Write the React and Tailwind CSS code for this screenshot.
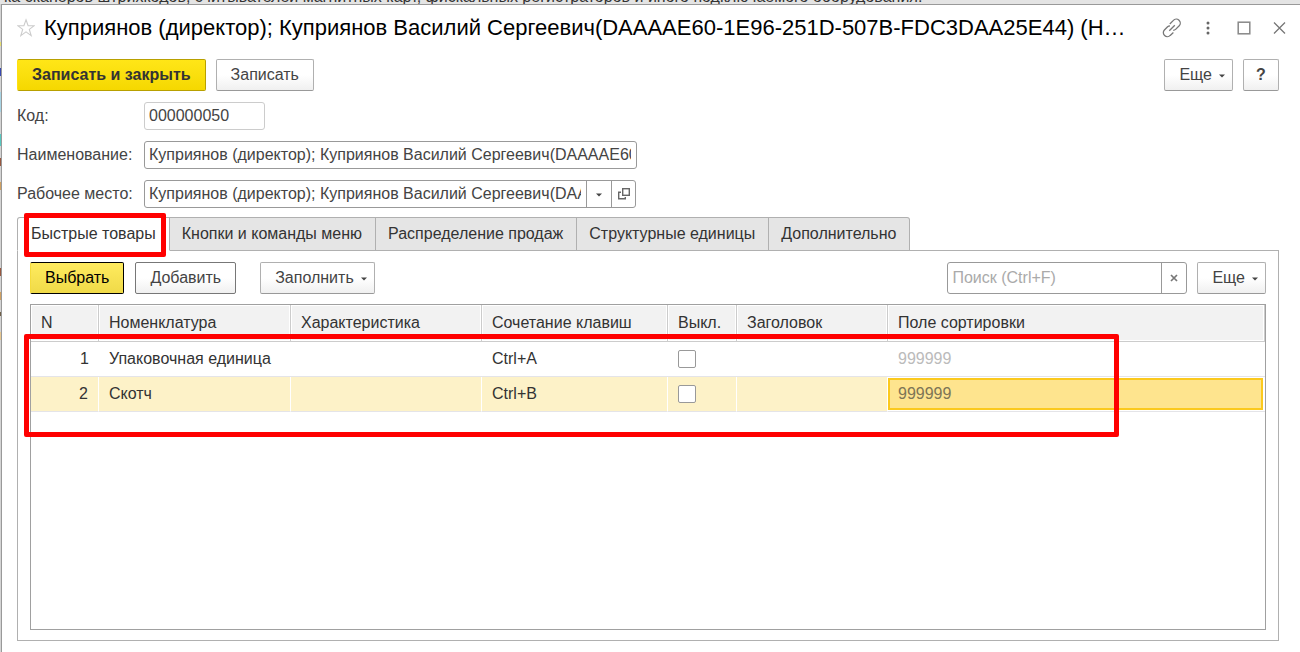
import React, { useState } from 'react';
import clsx from 'clsx';

const TABS = [
  'Быстрые товары',
  'Кнопки и команды меню',
  'Распределение продаж',
  'Структурные единицы',
  'Дополнительно'
];

const COLUMNS = [
  { title: 'N', width: 'w-[68px]' },
  { title: 'Номенклатура', width: 'w-[192px]' },
  { title: 'Характеристика', width: 'w-[191px]' },
  { title: 'Сочетание клавиш', width: 'w-[186px]' },
  { title: 'Выкл.', width: 'w-[69px]' },
  { title: 'Заголовок', width: 'w-[151px]' },
  { title: 'Поле сортировки', width: '' }
];

const ROWS = [
  { n: 1, name: 'Упаковочная единица', keys: 'Ctrl+A', sort: '999999' },
  { n: 2, name: 'Скотч', keys: 'Ctrl+B', sort: '999999' }
];

const FULL_NAME = 'Куприянов (директор); Куприянов Василий Сергеевич(DAAAAE60-1E96-251D-507B-FDC3DAA25E44)';

const Caret = () => (
  <svg width="6" height="4" viewBox="0 0 6 4" className="mt-[2px] shrink-0" aria-hidden="true">
    <path d="M0 0.5H6L3 3.5Z" fill="#444" />
  </svg>
);

const Button = ({ children, className, variant = 'plain', ...props }) => (
  <button
    type="button"
    className={clsx(
      'flex h-8 shrink-0 items-center justify-center rounded-xs border px-[14px] whitespace-nowrap',
      variant === 'plain' && 'border-[#b0b0b0] border-b-[#999] bg-linear-to-b from-white from-50% to-[#f0f0f0] text-[#444]',
      variant === 'dark' && 'border-[#777] bg-linear-to-b from-white from-50% to-[#f0f0f0] text-[#444]',
      variant === 'primary' && 'border-[#b8a000] border-l-[#ffe010] bg-linear-to-b from-[#ffe617] to-[#f5d800] font-bold text-[#333]',
      variant === 'focused' && 'border-black border-l-[#f5dc3c] bg-linear-to-b from-[#ffeb5e] to-[#f0da48] text-black',
      className
    )}
    {...props}
  >
    {children}
  </button>
);

const WindowIcons = () => (
  <div className="flex shrink-0 items-center gap-[17px] text-[#777]">
    <button type="button" aria-label="Получить ссылку">
      <svg width="20" height="20" viewBox="0 0 20 20" fill="none" stroke="currentColor" strokeWidth="1.3">
        <path d="M7.8 6L11.4 2.4A3.6 3.6 0 0 1 17.2 7.8L13.6 11.4A3.6 3.6 0 0 1 11.2 12.4" />
        <path d="M11.4 14.6L8.2 17.4A3.6 3.6 0 0 1 2.4 12L5.6 8.8A3.6 3.6 0 0 1 8 7.8" />
        <path d="M7.3 12.7L12.8 7.2" />
      </svg>
    </button>
    <button type="button" aria-label="Меню">
      <svg width="18" height="20" viewBox="0 0 18 20" fill="#666">
        <circle cx="9" cy="5" r="1.5" />
        <circle cx="9" cy="10" r="1.5" />
        <circle cx="9" cy="15" r="1.5" />
      </svg>
    </button>
    <button type="button" aria-label="Развернуть">
      <svg width="20" height="20" viewBox="0 0 20 20" fill="none" stroke="#888" strokeWidth="1.5">
        <rect x="4.2" y="4.2" width="11.6" height="11.6" />
      </svg>
    </button>
    <button type="button" aria-label="Закрыть">
      <svg width="18" height="20" viewBox="0 0 18 20" fill="none" stroke="currentColor" strokeWidth="1.3">
        <path d="M3 4.5L14 15.5M14 4.5L3 15.5" />
      </svg>
    </button>
  </div>
);

const Field = ({ id, label, children }) => (
  <div className="flex h-7 items-center">
    <label htmlFor={id} className="w-[127px] shrink-0">{label}</label>
    {children}
  </div>
);

// what is left visible of the page under the window
const BackPage = () => (
  <div className="w-px shrink-0 bg-[#d4d4d4] pt-[38px]" aria-hidden="true">
    <div className="h-1 bg-[#e8e070]" />
    <div className="mt-[22px] h-2 bg-[#3848b0]" />
    <div className="mt-4 h-5 bg-[#a8d4e4]" />
    <div className="mt-[22px] h-3 bg-[#58c8c0]" />
    <div className="mt-3 h-2 bg-[#985840]" />
    <div className="mt-4 h-2 bg-[#d0a060]" />
    <div className="mt-[78px] h-2 bg-[#985840]" />
    <div className="mt-4 h-2 bg-[#d0a060]" />
    <div className="mt-3 h-1 bg-[#706048]" />
    <div className="mt-4 h-2 bg-[#e8c890]" />
  </div>
);

const ItemsTable = () => {
  const [disabled, setDisabled] = useState({});

  return (
    <div className="relative flex-1 border border-[#a0a0a0]">
      <table className="w-full table-fixed border-separate border-spacing-0 text-left text-[#333]">
        <thead>
          <tr className="h-[37px]">
            {COLUMNS.map((col) => (
              <th
                key={col.title}
                className={clsx(
                  'border-r border-b border-[#ccc] bg-[#f2f2f2] px-[10px] font-normal whitespace-nowrap shadow-[inset_0_0_0_1px_#fff]',
                  col.width
                )}
              >
                {col.title}
              </th>
            ))}
          </tr>
        </thead>
        <tbody>
          {ROWS.map((row) => {
            const current = row.n === 2;
            const cell = clsx(
              'border-b border-b-[#e4e4e8] px-[10px] whitespace-nowrap',
              current && 'border-r border-r-white bg-[#fdf2c8] bg-clip-padding'
            );
            return (
              <tr key={row.n} className="h-[35px]">
                <td className={clsx(cell, 'text-right')}>{row.n}</td>
                <td className={cell}>{row.name}</td>
                <td className={cell}></td>
                <td className={cell}>{row.keys}</td>
                <td className={cell}>
                  <input
                    type="checkbox"
                    aria-label={'Выкл. ' + row.name}
                    checked={!!disabled[row.n]}
                    onChange={(e) => setDisabled({ ...disabled, [row.n]: e.target.checked })}
                    className="block size-[18px] appearance-none rounded-xs border border-[#999] bg-white checked:bg-[#ffe617]"
                  />
                </td>
                <td className={cell}></td>
                <td
                  className={clsx(
                    'border-b border-b-[#e4e4e8]',
                    current ? 'pr-[2px] text-[#7d7556]' : 'px-[10px] text-[#bbb]'
                  )}
                >
                  {current ? (
                    <div className="flex h-8 items-center border-2 border-[#fbc91e] bg-[#fee48e] px-2">{row.sort}</div>
                  ) : (
                    row.sort
                  )}
                </td>
              </tr>
            );
          })}
        </tbody>
      </table>

      {/* Highlight around the rows */}
      <div className="pointer-events-none absolute top-[29px] right-[146px] -left-[7px] h-[103px] rounded-xs border-5 border-[#f00]" />
    </div>
  );
};

const App = () => {
  const [activeTab, setActiveTab] = useState(0);
  const [search, setSearch] = useState('');

  return (
    <div className="flex min-h-screen flex-col bg-[#e4e4e4] font-['Liberation_Sans',Arial,sans-serif] text-base leading-5 text-[#444]">
      <div className="flex h-1 items-end overflow-hidden pl-1 leading-[14px] whitespace-nowrap text-[#333]">
        <p>ка сканеров штрихкодов, считывателей магнитных карт, фискальных регистраторов и иного подключаемого оборудования.</p>
      </div>

      <div className="flex flex-1">
        <BackPage />
        <main className="flex min-w-0 flex-1 flex-col border-t border-l border-[#999] bg-white pr-[21px] pb-[11px] pl-[15px]">
          {/* Title */}
          <header className="-mr-[10px] flex h-[46px] items-center">
            <button type="button" aria-label="В избранное" className="shrink-0">
              <svg width="18" height="20" viewBox="0 0 18 20" fill="none" stroke="#ccc" strokeWidth="1.1">
                <path d="M9 1.8L11.1 7.7H17.3L12.3 11.4L14.2 17.6L9 13.9L3.8 17.6L5.7 11.4L0.7 7.7H6.9Z" />
              </svg>
            </button>
            <h1 className="ml-[9px] min-w-0 flex-1 truncate text-[22px] leading-7 text-black">{FULL_NAME} (Н…</h1>
            <WindowIcons />
          </header>

          {/* Commands */}
          <div className="mt-2 flex gap-[10px]">
            <Button variant="primary">Записать и закрыть</Button>
            <Button>Записать</Button>
            <Button className="ml-auto gap-[7px] pr-[7px]">Еще <Caret /></Button>
            <Button className="w-9 font-bold" aria-label="Справка">?</Button>
          </div>

          {/* Fields */}
          <div className="mt-[11px] flex flex-col gap-[11px]">
            <Field id="code" label="Код:">
              <input id="code" defaultValue="000000050" className="h-7 w-[121px] rounded-[3px] border border-[#ccc] pr-[5px] pl-1 outline-none" />
            </Field>
            <Field id="name" label="Наименование:">
              <input id="name" defaultValue={FULL_NAME} className="h-7 w-[493px] rounded-[3px] border border-[#999] pr-[5px] pl-1 outline-none" />
            </Field>
            <Field id="workplace" label="Рабочее место:">
              <div className="flex h-7 w-[492px] rounded-[3px] border border-[#999]">
                <input id="workplace" defaultValue={FULL_NAME} className="min-w-0 flex-1 pr-[5px] pl-1 outline-none" />
                <button type="button" aria-label="Выбрать из списка" className="flex w-[25px] items-center justify-center border-l border-[#999]">
                  <Caret />
                </button>
                <button type="button" aria-label="Открыть" className="flex w-6 items-center justify-center border-l border-[#999]">
                  <svg width="12" height="12" viewBox="0 0 12 12" fill="none" stroke="#666" strokeWidth="1.4">
                    <rect x="4.7" y="0.7" width="6.6" height="6.6" />
                    <path d="M3 4.2H0.7V10.8H7.3V9" />
                  </svg>
                </button>
              </div>
            </Field>
          </div>

          {/* Tabs */}
          <div className="relative z-10 mt-[9px] -mb-px flex" role="tablist">
            {TABS.map((tab, i) => (
              <button
                key={tab}
                type="button"
                role="tab"
                aria-selected={i === activeTab}
                onClick={() => setActiveTab(i)}
                className={clsx(
                  'relative h-[34px] border-t border-r border-b border-[#b0b0b0] px-[13px] whitespace-nowrap text-[#333] not-first:pl-3 first:rounded-tl-[3px] first:border-l last:rounded-tr-[3px]',
                  i === activeTab ? 'border-b-white bg-white' : 'bg-[#e5e5e5]'
                )}
              >
                {tab}
                {i === 0 && (
                  <span className="pointer-events-none absolute -top-[5px] right-[3px] left-[6px] h-11 rounded-xs border-5 border-[#f00]" />
                )}
              </button>
            ))}
          </div>

          <section className="flex flex-1 flex-col gap-[10px] border border-[#b0b0b0] px-3 pt-[11px] pb-[10px]">
            <div className="flex">
              <Button variant="focused">Выбрать</Button>
              <Button variant="dark" className="ml-[11px]">Добавить</Button>
              <Button className="ml-6 gap-[7px] pr-[7px]">Заполнить <Caret /></Button>
              <div className="ml-auto flex h-8 w-60 rounded-[3px] border border-[#999]">
                <input
                  type="text"
                  aria-label="Поиск"
                  placeholder="Поиск (Ctrl+F)"
                  value={search}
                  onChange={(e) => setSearch(e.target.value)}
                  className="min-w-0 flex-1 px-1 outline-none placeholder:text-[#aaa]"
                />
                <button
                  type="button"
                  aria-label="Очистить"
                  onClick={() => setSearch('')}
                  className="flex w-[25px] items-center justify-center border-l border-[#999]"
                >
                  <svg width="8" height="8" viewBox="0 0 8 8" stroke="#777" strokeWidth="1.7">
                    <path d="M1 1L7 7M7 1L1 7" />
                  </svg>
                </button>
              </div>
              <Button className="ml-[10px] gap-[7px] pr-[7px]">Еще <Caret /></Button>
            </div>
            <ItemsTable />
          </section>
        </main>
      </div>
    </div>
  );
};

export default App;
